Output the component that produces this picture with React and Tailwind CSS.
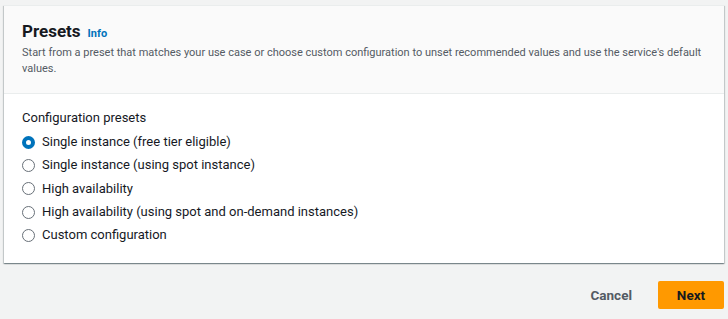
import React, { useState } from 'react'

const options = [
  'Single instance (free tier eligible)',
  'Single instance (using spot instance)',
  'High availability',
  'High availability (using spot and on-demand instances)',
  'Custom configuration',
]

function Radio({ checked }) {
  return checked ? (
    <span className="w-[13px] h-[13px] rounded-full border-[4px] border-[#0073bb] bg-white shrink-0" />
  ) : (
    <span className="w-[13px] h-[13px] rounded-full border-[1.5px] border-[#687078] bg-white shrink-0" />
  )
}

export default function App() {
  const [selected, setSelected] = useState(0)

  return (
    <div className="min-h-[319px] bg-[#f2f3f3] font-['Roboto',sans-serif] text-[#16191f] pt-[5px] px-[4px]">
      {/* Presets panel */}
      <div className="bg-white shadow-[0_1px_1px_0_rgba(0,28,36,0.3),1px_1px_1px_0_rgba(0,28,36,0.15),-1px_1px_1px_0_rgba(0,28,36,0.15)] border-t border-[#eaeded]">
        <div className="bg-[#fafafa] border-b border-[#eaeded] px-[18px] pt-[14px] pb-[16px]">
          <h2 className="flex items-baseline gap-[7px]">
            <span className="text-[17px] font-bold leading-[22px]">Presets</span>
            <span className="text-[11px] font-bold text-[#0073bb]">Info</span>
          </h2>
          <p className="text-[11px] leading-[16px] text-[#545b64] mt-[2px]">
            Start from a preset that matches your use case or choose custom configuration to unset recommended values and use the service's default values.
          </p>
        </div>

        <div className="px-[18px] pt-[13px] pb-[16px] text-[13px]">
          <div className="leading-[22px] mb-[2px]">Configuration presets</div>
          <div className="flex flex-col">
            {options.map((opt, i) => (
              <label
                key={opt}
                onClick={() => setSelected(i)}
                className="flex items-center gap-[7px] h-[23.3px] cursor-pointer"
              >
                <Radio checked={selected === i} />
                <span className="leading-[20px]">{opt}</span>
              </label>
            ))}
          </div>
        </div>
      </div>

      {/* Actions */}
      <div className="flex justify-end items-center gap-[26px] mt-[18px]">
        <button className="text-[13.5px] font-bold text-[#545b64]">Cancel</button>
        <button className="bg-[#ff9900] text-[13.5px] font-bold text-[#16191f] rounded-[2px] w-[66px] h-[28px]">
          Next
        </button>
      </div>
    </div>
  )
}
